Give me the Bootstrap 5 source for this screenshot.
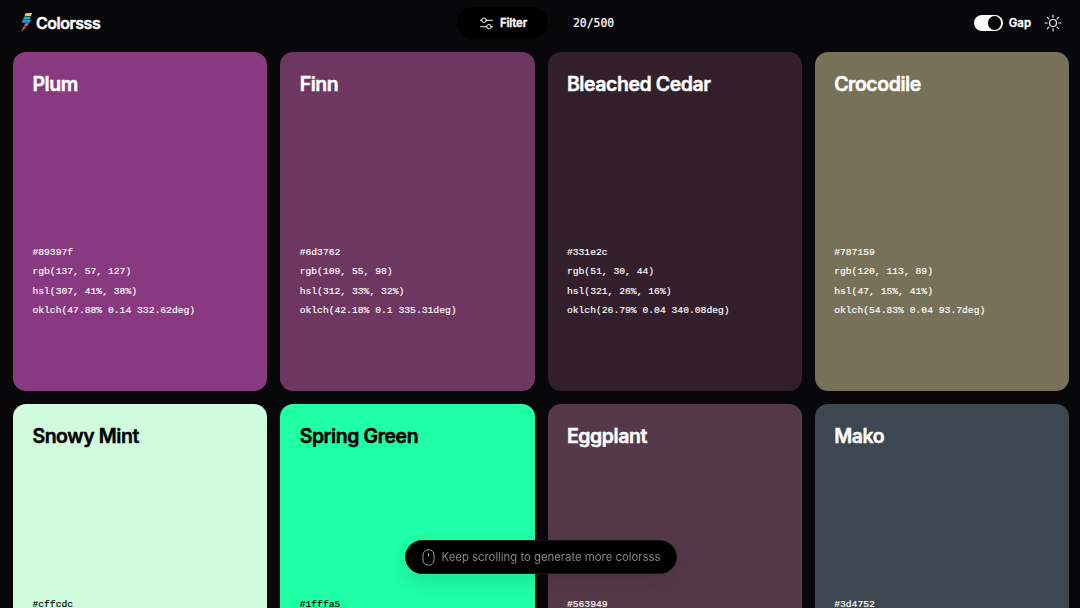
<!DOCTYPE html>
<html lang="en" data-bs-theme="dark">
<head>
<meta charset="utf-8">
<meta name="viewport" content="width=device-width, initial-scale=1">
<title>Colorsss</title>
<link href="https://cdn.jsdelivr.net/npm/bootstrap@5.3.0/dist/css/bootstrap.min.css" rel="stylesheet">
<style>
body{background:#08080a;font-family:Inter,"Liberation Sans",sans-serif;color:#fff;height:100vh}
.topbar{height:52px;flex:none;padding:0 18px 6px 20px;display:grid;grid-template-columns:437px 1fr auto}
.logo-text{font-size:16px;font-weight:600;letter-spacing:-.5px;line-height:20px;margin-left:3px;-webkit-text-stroke:.4px #fff}
.filter-btn{width:91px;height:32px;background:#000;font-size:11.4px;font-weight:600;color:#fff;letter-spacing:-.15px;border:0;padding:1px 0 0 2px;-webkit-text-stroke:.3px #fff}
.filter-btn svg{margin:-1px 7px 0 0}
.counter{font:11.4px/16px "DejaVu Sans Mono",monospace;margin-left:25px;-webkit-text-stroke:.2px #fff}
.gap-switch{width:29px;height:16.5px;background:#fff;padding:1.5px}
.gap-switch i{width:13.5px;height:13.5px;background:#000}
.gap-label{font-size:11.4px;font-weight:600;margin:1px 13px 0 6px;-webkit-text-stroke:.3px #fff}
.swatches{min-height:0;padding:0 11px 0 13px;display:grid;grid-template-columns:repeat(4,minmax(0,1fr));grid-auto-rows:339px;gap:13px}
.swatch{border-radius:13px;padding:20px 19.4px 70.4px;color:#fff}
.swatch.ink{color:#000}
.swatch h2{font-size:19.5px;line-height:24px;font-weight:600;letter-spacing:-.44px;margin:0;color:inherit;-webkit-text-stroke:.45px currentColor}
.codes{font:9.7px/19.4px "Liberation Mono",monospace;white-space:nowrap;-webkit-text-stroke:.15px currentColor}
.hint{bottom:34px;left:405px;width:272px;height:34px;background:#000;border:1px solid #151515;font-size:11.4px;color:#858585;box-shadow:0 8px 20px rgba(0,0,0,.1);letter-spacing:-.03px}
.hint span{padding:1px 0 0 7px}
</style>
</head>
<body class="overflow-hidden d-flex flex-column">
<header class="topbar align-items-center">
  <div class="d-flex align-items-center">
    <svg width="13" height="20" viewBox="0 0 13 20"><path fill="#efc66d" d="M5.8 0H12L11 3H4.5z"/><path fill="#38a99a" d="M4.2 3.4h6.5L9.8 6.4H3z"/><path fill="#2496df" d="M2.7 6.8h8.5L9.6 9.8H1.7z"/><path fill="#e64e83" d="M5.3 10.2h4L7.1 13H4z"/><path fill="#ef665b" d="M3.7 13.4h2.8L1 19z"/></svg>
    <span class="logo-text">Colorsss</span>
  </div>
  <div class="d-flex align-items-center">
    <button class="btn filter-btn rounded-pill d-flex align-items-center justify-content-center">
      <svg width="13" height="13" viewBox="0 0 13 13" fill="none" stroke="#fff" stroke-width=".95" stroke-linecap="round"><path d="M.5 3.3h1.2M6.3 3.3h6.2M.5 9.7h6.2M11.3 9.7h1.2"/><circle cx="4" cy="3.3" r="2.25"/><circle cx="9" cy="9.7" r="2.25"/></svg>Filter
    </button>
    <span class="counter">20/500</span>
  </div>
  <div class="d-flex align-items-center">
    <span class="gap-switch rounded-pill d-flex justify-content-end align-items-center"><i class="rounded-circle"></i></span>
    <span class="gap-label">Gap</span>
    <svg width="18" height="18" viewBox="0 0 18 18" fill="none" stroke="#eee" stroke-width="1.2" stroke-linecap="round"><circle cx="9" cy="9" r="3.5"/><path d="M9 1.2v2M9 14.8v2M1.2 9h2M14.8 9h2M3.4 3.4l1.5 1.5M13.1 13.1l1.5 1.5M3.4 14.6l1.5-1.5M13.1 4.9l1.5-1.5"/></svg>
  </div>
</header>
<main class="swatches flex-fill overflow-hidden">
  <article class="swatch d-flex flex-column justify-content-between" style="background:#89397f"><h2>Plum</h2><div class="codes">#89397f<br>rgb(137, 57, 127)<br>hsl(307, 41%, 38%)<br>oklch(47.88% 0.14 332.62deg)</div></article>
  <article class="swatch d-flex flex-column justify-content-between" style="background:#6d3762"><h2>Finn</h2><div class="codes">#6d3762<br>rgb(109, 55, 98)<br>hsl(312, 33%, 32%)<br>oklch(42.18% 0.1 335.31deg)</div></article>
  <article class="swatch d-flex flex-column justify-content-between" style="background:#331e2c"><h2>Bleached Cedar</h2><div class="codes">#331e2c<br>rgb(51, 30, 44)<br>hsl(321, 26%, 16%)<br>oklch(26.79% 0.04 340.08deg)</div></article>
  <article class="swatch d-flex flex-column justify-content-between" style="background:#787159"><h2>Crocodile</h2><div class="codes">#787159<br>rgb(120, 113, 89)<br>hsl(47, 15%, 41%)<br>oklch(54.83% 0.04 93.7deg)</div></article>
  <article class="swatch ink d-flex flex-column justify-content-between" style="background:#cffcdc"><h2>Snowy Mint</h2><div class="codes">#cffcdc<br><br><br><br></div></article>
  <article class="swatch ink d-flex flex-column justify-content-between" style="background:#1fffa5"><h2>Spring Green</h2><div class="codes">#1fffa5<br><br><br><br></div></article>
  <article class="swatch d-flex flex-column justify-content-between" style="background:#563949"><h2>Eggplant</h2><div class="codes">#563949<br><br><br><br></div></article>
  <article class="swatch d-flex flex-column justify-content-between" style="background:#3d4752"><h2>Mako</h2><div class="codes">#3d4752<br><br><br><br></div></article>
</main>
<div class="hint position-fixed rounded-pill d-flex align-items-center justify-content-center">
  <svg width="13" height="17" viewBox="0 0 13 17" fill="none" stroke="#999" stroke-linecap="round"><rect x="1" y=".8" width="11" height="15.4" rx="5.2"/><path d="M6.5 4.2v3"/></svg>
  <span>Keep scrolling to generate more colorsss</span>
</div>
<script src="https://cdn.jsdelivr.net/npm/bootstrap@5.3.0/dist/js/bootstrap.bundle.min.js"></script>
</body>
</html>
